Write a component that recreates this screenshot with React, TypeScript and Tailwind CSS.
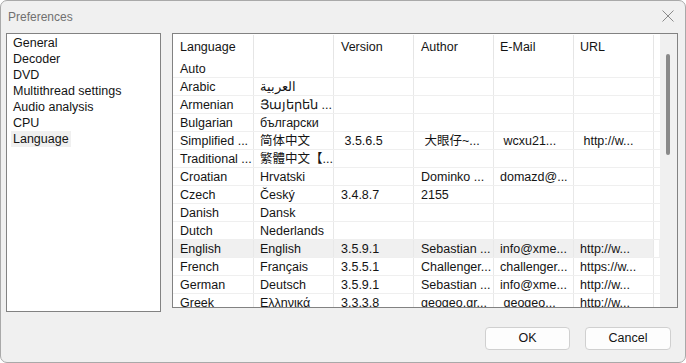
import React from 'react';

const sections = ['General', 'Decoder', 'DVD', 'Multithread settings', 'Audio analysis', 'CPU', 'Language'];

type Row = [string, string, string, string, string, string];

const rows: Row[] = [
  ['Auto', '', '', '', '', ''],
  ['Arabic', 'العربية', '', '', '', ''],
  ['Armenian', 'Յայերեն ...', '', '', '', ''],
  ['Bulgarian', 'български', '', '', '', ''],
  ['Simplified ...', '简体中文', ' 3.5.6.5', ' 大眼仔~...', ' wcxu21...', ' http://w...'],
  ['Traditional ...', '繁體中文【...', '', '', '', ''],
  ['Croatian', 'Hrvatski', '', 'Dominko ...', 'domazd@...', ''],
  ['Czech', 'Český', '3.4.8.7', '2155', '', ''],
  ['Danish', 'Dansk', '', '', '', ''],
  ['Dutch', 'Nederlands', '', '', '', ''],
  ['English', 'English', '3.5.9.1', 'Sebastian ...', 'info@xme...', 'http://w...'],
  ['French', 'Français', '3.5.5.1', 'Challenger...', 'challenger...', 'https://w...'],
  ['German', 'Deutsch', '3.5.9.1', 'Sebastian ...', 'info@xme...', 'http://w...'],
  ['Greek', 'Ελληνικά', '3.3.3.8', 'geogeo.gr...', ' geogeo...', 'http://w...'],
];

const headers = ['Language', '', 'Version', 'Author', 'E-Mail', 'URL'];

const cellW = ['w-[81px] pl-[7px]', 'w-[80px] pl-[6px]', 'w-[80px] pl-[7px]', 'w-[80px] pl-[7px]', 'w-[80px] pl-[6px]', 'w-[80px] pl-[6px]'];

const App: React.FC = () => {
  return (
    <div
      className="w-[686px] h-[363px] bg-[#f0f0f0] border border-[#a9a9a9] rounded-[7px] flex flex-col overflow-hidden text-[12.5px] text-[#141414]"
      style={{ fontFamily: '"Liberation Sans", "Noto Sans CJK SC", Arial, sans-serif' }}
    >
      {/* Title bar */}
      <div className="h-[32px] flex items-center justify-between pl-[7px] pr-[10px] shrink-0">
        <span className="text-[12px] text-[#707070]">Preferences</span>
        <svg width="14" height="14" viewBox="0 0 14 14" className="mb-[2px]">
          <path d="M1.5 1.5 L12.5 12.5 M12.5 1.5 L1.5 12.5" stroke="#8a8a8a" strokeWidth="1" fill="none" />
        </svg>
      </div>

      <div className="flex pl-[5px] gap-[11px]">
        {/* Section list */}
        <div className="w-[155px] h-[279px] bg-white border border-[#828282] pt-[1px] pl-[4px]">
          {sections.map((s) => (
            <div key={s} className="h-[16px] leading-[16px]">
              <span className={`px-[2px] inline-block ${s === 'Language' ? 'bg-[#f0f0f0]' : ''}`}>{s}</span>
            </div>
          ))}
        </div>

        {/* Language table */}
        <div className="w-[506px] h-[275px] bg-white border border-[#828282] flex overflow-hidden">
          <div className="flex-1 flex flex-col overflow-hidden">
            <div className="h-[25px] flex shrink-0 pt-[1px]">
              {headers.map((h, i) => (
                <div key={i} className={`${cellW[i]} h-full flex items-center border-r border-[#e5e5e5] shrink-0`}>
                  {h}
                </div>
              ))}
              <div className="w-[5px] shrink-0" />
            </div>
            {rows.map((r, ri) => (
              <div
                key={ri}
                className={`h-[18px] flex shrink-0 ${ri > 0 ? 'border-t border-[#efefef]' : ''} ${r[0] === 'English' ? 'bg-[#f0f0f0]' : ''}`}
              >
                {r.map((c, ci) => (
                  <div
                    key={ci}
                    className={`${cellW[ci]} h-full flex items-center pt-[2px] border-r border-[#e8e8e8] shrink-0 whitespace-pre overflow-hidden`}
                  >
                    {c}
                  </div>
                ))}
                <div className="w-[5px] shrink-0 bg-white" />
              </div>
            ))}
          </div>
          {/* Scrollbar */}
          <div className="w-[17px] h-full bg-[#f0f0f0] shrink-0 pt-[20px] pl-[6px]">
            <div className="w-[4px] h-[101px] bg-[#8a8a8a] rounded-[2px]" />
          </div>
        </div>
      </div>

      {/* Buttons */}
      <div className="flex justify-end gap-[15px] pr-[14px] mt-[15px]">
        <button className="w-[85px] h-[23px] bg-[#fdfdfd] border border-[#d0d0d0] rounded-[4px] text-[12.5px] text-[#141414]">
          OK
        </button>
        <button className="w-[86px] h-[23px] bg-[#fdfdfd] border border-[#d0d0d0] rounded-[4px] text-[12.5px] text-[#141414]">
          Cancel
        </button>
      </div>
    </div>
  );
};

export default App;
